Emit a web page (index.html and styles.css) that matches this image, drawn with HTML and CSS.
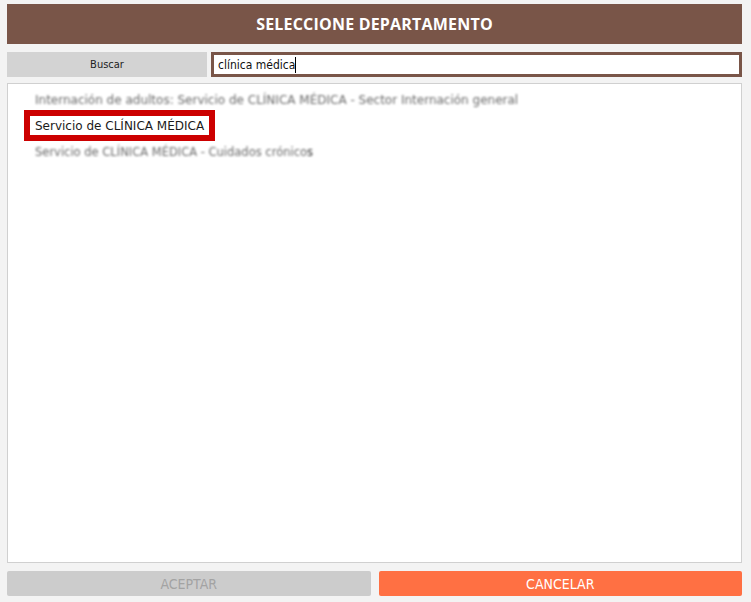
FILE: index.html
```html
<!DOCTYPE html>
<html lang="es">
<head>
<meta charset="utf-8">
<title>Seleccione departamento</title>
<link rel="stylesheet" href="styles.css">
</head>
<body>
<div class="dialog">
  <header class="title">SELECCIONE DEPARTAMENTO</header>
  <div class="search">
    <button class="search-btn" type="button">Buscar</button>
    <div class="search-input">clínica médica<span class="caret"></span></div>
  </div>
  <div class="list">
    <div class="row muted wide">Internación de adultos: Servicio de CLÍNICA MÉDICA - Sector Internación general</div>
    <div class="row selected"><span class="label">Servicio de CLÍNICA MÉDICA</span></div>
    <div class="row muted">Servicio de CLÍNICA MÉDICA - Cuidados crónico<span class="clear">s</span></div>
  </div>
  <div class="actions">
    <button class="btn btn-ok" type="button">ACEPTAR</button>
    <button class="btn btn-cancel" type="button">CANCELAR</button>
  </div>
</div>
</body>
</html>
```

FILE: styles.css
```css
html, body {
  margin: 0;
  padding: 0;
  background: #f3f3f3;
  width: 751px;
  height: 602px;
  overflow: hidden;
}

.dialog {
  box-sizing: border-box;
  width: 751px;
  height: 602px;
  padding: 4px 9px 6px 7px;
  display: flex;
  flex-direction: column;
}

.title {
  height: 40px;
  background: #795548;
  color: #ffffff;
  font-family: "Open Sans", sans-serif;
  font-weight: 700;
  font-size: 16px;
  display: flex;
  align-items: center;
  justify-content: center;
  letter-spacing: 0.2px;
}

.search {
  margin-top: 8px;
  height: 25px;
  display: flex;
  gap: 4px;
}

.search-btn {
  width: 200px;
  border: none;
  margin: 0;
  padding: 0;
  background: #d3d3d3;
  font-family: "DejaVu Sans Condensed", "DejaVu Sans", sans-serif;
  font-stretch: condensed;
  font-size: 11px;
  color: #222;
}

.search-input {
  flex: 1;
  box-sizing: border-box;
  border: 3px solid #795548;
  background: #fff;
  padding-left: 4px;
  display: flex;
  align-items: center;
  font-family: "DejaVu Sans Condensed", "DejaVu Sans", sans-serif;
  font-stretch: condensed;
  font-size: 12px;
  color: #111;
}

.caret {
  display: inline-block;
  width: 1px;
  height: 16px;
  background: #000;
}

.list {
  margin-top: 6px;
  flex: 1;
  background: #fff;
  border: 1px solid #d0d0d0;
  padding-top: 5px;
  font-family: "DejaVu Sans", sans-serif;
  font-size: 12px;
  color: #1a1a1a;
}

.row {
  display: flex;
  align-items: center;
  padding-left: 16px;
}

.muted {
  height: 21px;
  color: #6a6a6a;
  filter: blur(1.1px);
  white-space: nowrap;
  font-size: 11.5px;
  padding-left: 27px;
}

.muted.wide {
  font-size: 12px;
}

.muted .clear {
  filter: none;
  color: #333;
}

.selected {
  height: 31px;
}

.label {
  box-sizing: border-box;
  height: 31px;
  border: 6px solid #cc0000;
  padding: 0 5px;
  display: flex;
  align-items: center;
  background: #fff;
}

.actions {
  margin-top: 8px;
  height: 25px;
  display: flex;
  gap: 8px;
}

.btn {
  flex: 1;
  border: none;
  margin: 0;
  padding: 0;
  border-radius: 2px;
  font-family: "DejaVu Sans Condensed", "DejaVu Sans", sans-serif;
  font-stretch: condensed;
  font-size: 14px;
}

.btn-ok {
  background: #cccccc;
  color: #a3a3a3;
}

.btn-cancel {
  background: #ff7043;
  color: #ffffff;
}
```
